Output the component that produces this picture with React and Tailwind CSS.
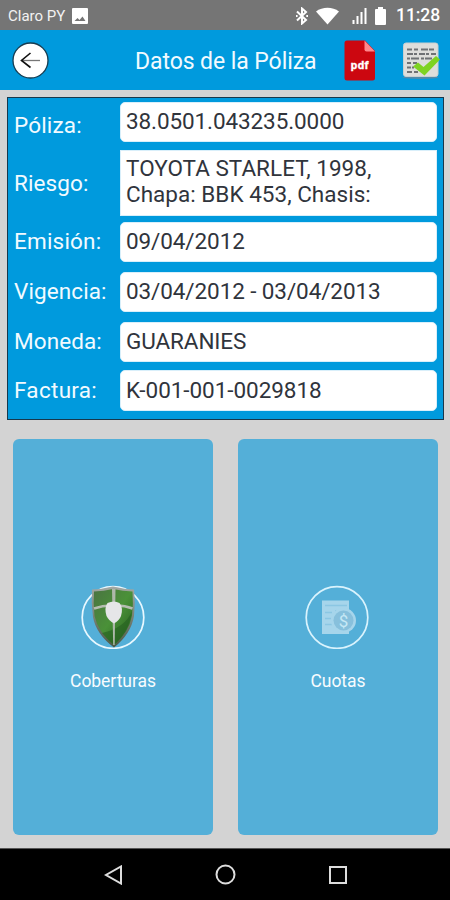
import React from 'react';

const fields = [
  { label: 'Póliza:', value: '38.0501.043235.0000', row: 'h-[40px]', labelPos: 'pt-[7px] tracking-[0.15px]', valuePos: 'pb-[2px] tracking-[-0.1px]' },
  { label: 'Riesgo:', multiline: true, row: 'h-[66px] mt-[8px]', labelPos: 'pt-[1px] tracking-[0.1px]', valuePos: 'pb-[4px] tracking-[0.02px]' },
  { label: 'Emisión:', value: '09/04/2012', row: 'h-[40px] mt-[6px]', labelPos: 'pb-[2px] tracking-[0.2px]', valuePos: 'pb-[2px] tracking-[-0.1px]' },
  { label: 'Vigencia:', value: '03/04/2012 - 03/04/2013', row: 'h-[40px] mt-[10px]', labelPos: 'pb-[2px] tracking-[0.1px]', valuePos: 'pb-[1px] tracking-[-0.1px]' },
  { label: 'Moneda:', value: 'GUARANIES', row: 'h-[40px] mt-[10px]', labelPos: 'pb-[2px] tracking-[0.1px]', valuePos: 'pb-[1px] tracking-[-0.1px]' },
  { label: 'Factura:', value: 'K-001-001-0029818', row: 'h-[41px] mt-[8px]', labelPos: 'pb-[1px] tracking-[0.3px]', valuePos: 'pb-[1px] tracking-[-0.05px]' },
];

function StatusBar() {
  return (
    <div className="h-[30px] bg-[#757575] flex items-center pt-[2px] pl-2 pr-[10px] text-white">
      <span className="text-[15px] text-[#f2f2f2]">Claro PY</span>
      <svg className="ml-[7px] w-4 h-4 shrink-0" viewBox="0 0 16 16">
        <rect width="16" height="16" rx="1" fill="#fff" />
        <path d="M2.5 13 5.5 10l2 2 3-3.5 3 4.5z" fill="#757575" />
      </svg>
      <div className="ml-auto flex items-center">
        <svg className="w-[14px] h-[18px]" viewBox="0 0 14 18" fill="none" stroke="#fff" strokeWidth="2">
          <path d="M2 4.5 11 13 7 16.5V1.5L11 5 2 13.5" />
          <path d="M1 9h1.6M11.3 9h1.7" />
        </svg>
        <svg className="ml-[7px] w-[23px] h-[18px]" viewBox="0 0 23 18">
          <path d="M0 4.5C6.5-.5 16.5-.5 23 4.5L11.5 17.5z" fill="#fff" />
        </svg>
        <svg className="ml-[13px] w-[15px] h-[18px]" viewBox="0 0 15 18" fill="#fff">
          <path d="M.5 13h2v4h-2zM4.5 9h2v8h-2zM8.5 5h2V17h-2zM12.5 1h2v16h-2z" />
        </svg>
        <svg className="ml-[8px] w-[11px] h-[18px]" viewBox="0 0 11 18">
          <path d="M3 0h5v2h2q1 0 1 1v14q0 1-1 1H1q-1 0-1-1V3q0-1 1-1h2z" fill="#fff" />
        </svg>
        <span className="ml-[10px] text-[17.5px] font-medium leading-none tracking-[-0.1px]">11:28</span>
      </div>
    </div>
  );
}

function PdfIcon() {
  return (
    <svg className="w-[32px] h-[41px]" viewBox="0 0 32 41">
      <path d="M3 .5H21L31 11V38q0 2.5-2.5 2.5H3Q.5 40.5.5 38V3Q.5.5 3 .5z" fill="#cc0710" />
      <path d="M20.500.5 31 11.5H22.5q-2 0-2-2z" fill="#ff888d" />
      <text x="15.7" y="29" textAnchor="middle" fontSize="11.5" fontWeight="700" fill="#fff" stroke="#fff" strokeWidth=".3" fontFamily="Roboto, sans-serif" textLength="18">pdf</text>
    </svg>
  );
}

function ChecklistIcon() {
  return (
    <svg className="w-[38px] h-[40px]" viewBox="0 0 38 40">
      <ellipse cx="18.500" cy="37.5" rx="18" ry="1.5" fill="#528aa9" />
      <rect x="1.5" y="3" width="34.5" height="33.5" rx="2.5" fill="#dededb" stroke="#c8cfd0" />
      <g stroke="#6f7275" strokeWidth="2.2">
        <path d="M5 9.500h29" strokeDasharray="5 2 4 3 7 1" />
        <path d="M5 14h29" strokeDasharray="6 1 3 2" />
        <path d="M5 18.500h25" strokeDasharray="3 1 8 2" />
        <path d="M5 23h10" strokeDasharray="4 2" />
        <path d="M5 27.500h7" strokeDasharray="4 1" />
        <path d="M5 32h11" strokeDasharray="5 2" />
      </g>
      <path d="M11 26.500 16 22.500 21.500 27 34 16 38 19.500 22.500 35.500z" fill="#7ed321" />
    </svg>
  );
}

function Header() {
  return (
    <header className="h-[60px] bg-[#009add] flex items-center">
      <svg className="ml-3 w-[37px] h-[37px]" viewBox="0 0 37 37" fill="none">
        <circle cx="18.5" cy="18.5" r="17.5" fill="#fff" stroke="#173c50" strokeWidth="1.3" />
        <path d="M9 18.5H28" stroke="#777" strokeWidth="1.3" />
        <path d="M18.5 11 9.5 18.5 18.5 25.5" stroke="#111" strokeWidth="1.6" />
      </svg>
      <h1 className="ml-[86px] w-[182px] text-[23px] leading-none tracking-[-0.08px] whitespace-nowrap text-[#f2faff] pt-[2px]">Datos de la Póliza</h1>
      <div className="ml-[27px]"><PdfIcon /></div>
      <div className="ml-[26px]"><ChecklistIcon /></div>
    </header>
  );
}

function PolicyPanel() {
  return (
    <section className="ml-[7px] mt-[7px] mr-[6px] h-[323px] bg-[#009add] border border-[#17384c] pt-1 px-[6px]">
      {fields.map((field) => (
        <div key={field.label} className={`flex ${field.row}`}>
          <div className={`w-[106px] shrink-0 flex items-center text-[22.5px] leading-none text-[#f2faff] whitespace-nowrap ${field.labelPos}`}>
            {field.label}
          </div>
          <div
            className={`flex-1 bg-white border border-[#d9effa] pl-[5px] text-[22.5px] text-[#30343c] whitespace-nowrap flex items-center ${field.valuePos} ${
              field.multiline ? 'leading-[26px]' : 'rounded-[5px] leading-none'
            }`}
          >
            {field.multiline ? (
              <div>
                TOYOTA STARLET, 1998,
                <br />
                Chapa: BBK 453, Chasis:
              </div>
            ) : (
              field.value
            )}
          </div>
        </div>
      ))}
    </section>
  );
}

function ShieldIcon() {
  return (
    <svg className="w-16 h-16" viewBox="0 0 64 64">
      <defs>
        <linearGradient id="shieldGreen" x1="0" y1="0" x2="1" y2="1">
          <stop offset="0" stopColor="#4a7442" />
          <stop offset=".5" stopColor="#4a9138" />
          <stop offset="1" stopColor="#245c1c" />
        </linearGradient>
        <linearGradient id="shieldMetal" x1="0" y1="0" x2="0" y2="1">
          <stop offset="0" stopColor="#a3a8a4" />
          <stop offset="1" stopColor="#4b5a46" />
        </linearGradient>
      </defs>
      <circle cx="32" cy="32.5" r="30.8" fill="none" stroke="#e8f8ff" strokeWidth="1.7" />
      <path d="M11 4.500Q22 4 32 1.500 42 4 53 4.500 54.500 18 53 31 50 49 33 62.500 15 49 12 32 10 18 11 4.500z" fill="url(#shieldMetal)" />
      <path d="M13 6.500Q23 6 32 4 42 6 51.500 6.500 52.500 19 51 30.500 48 47 33 60 17 47 13.500 31 12 18 13 6.500z" fill="url(#shieldGreen)" />
      <path d="M51 26Q44 43 21 48 27 55 33 60 48 47 51 26z" fill="#255f20" opacity=".6" />
      <path d="M13 23.500Q23 20 32.500 20.500 43 20 51.500 23.500" fill="none" stroke="#b4bdb0" strokeWidth="2.500" />
      <path d="M31 4h3.500L33.700 60h-1.500z" fill="#aeb8aa" />
      <path d="M26.500 18Q33 15 38.500 18 42.500 23 40 31 38 36 33 38.500 28 36 25.500 31 23 23 26.500 18z" fill="#e6e6e8" />
    </svg>
  );
}

function InvoiceIcon() {
  return (
    <svg className="w-16 h-16 -ml-[3px]" viewBox="0 0 64 64">
      <circle cx="32" cy="32.5" r="30.800" fill="none" stroke="#d9f3fd" strokeWidth="1.7" />
      <path d="M17 15.5H44V49H17z" fill="#a6d5eb" />
      <g stroke="#8bc7e3" strokeWidth="1.3">
        <path d="M20 20.5H42M20 27.5h7M20 33.5h6M20 39.5h7M30 26h8" />
      </g>
      <circle cx="38.5" cy="35.5" r="12.500" fill="#a6d5eb" />
      <circle cx="38.5" cy="35.5" r="10" fill="#87c0dc" />
      <text x="38.5" y="41.5" textAnchor="middle" fontSize="17" fill="#c6e8f5" fontFamily="Roboto, sans-serif">$</text>
    </svg>
  );
}

function Tile({ label, children }) {
  return (
    <button className="w-[200px] h-[396px] rounded-[6px] bg-[#54afd8] flex flex-col items-center pt-[146px]">
      {children}
      <span className="mt-[21px] text-[17.5px] leading-[22px] tracking-[-0.05px] text-[#f8fcff]">{label}</span>
    </button>
  );
}

function NavBar() {
  return (
    <nav className="h-[52px] bg-black border-t border-[#555] flex items-center">
      <svg className="ml-[104px] w-[19px] h-[20px]" viewBox="0 0 19 20" fill="none" stroke="#ddd" strokeWidth="2">
        <path d="M17 1.5V18.5L2 10z" />
      </svg>
      <svg className="ml-[92px] w-[21px] h-[21px]" viewBox="0 0 21 21" fill="none" stroke="#ddd" strokeWidth="2">
        <circle cx="10.5" cy="10.5" r="9" />
      </svg>
      <svg className="ml-[93px] w-[18px] h-[18px]" viewBox="0 0 18 18" fill="none" stroke="#ddd" strokeWidth="2">
        <rect x="1" y="1" width="16" height="16" />
      </svg>
    </nav>
  );
}

export default function App() {
  return (
    <div className="w-[450px] h-[900px] bg-[#d3d3d3] font-['Roboto',sans-serif] flex flex-col overflow-hidden">
      <StatusBar />
      <Header />
      <PolicyPanel />
      <div className="mt-[19px] ml-[13px] flex gap-[25px]">
        <Tile label="Coberturas">
          <ShieldIcon />
        </Tile>
        <Tile label="Cuotas">
          <InvoiceIcon />
        </Tile>
      </div>
      <div className="mt-auto">
        <NavBar />
      </div>
    </div>
  );
}
